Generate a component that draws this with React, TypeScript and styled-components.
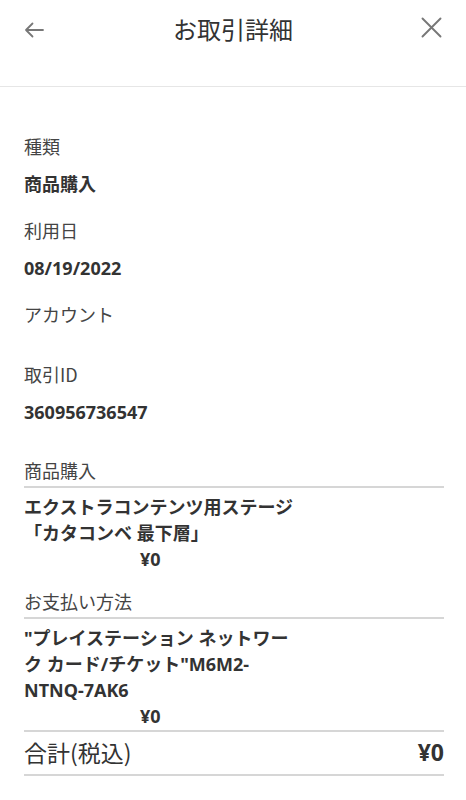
import React from "react";
import styled, { createGlobalStyle } from "styled-components";

const Global = createGlobalStyle`
  html, body { margin: 0; padding: 0; background: #fff; }
  body { font-family: "Noto Sans", "Noto Sans CJK JP", sans-serif; color: #333; }
`;

const Page = styled.div`
  width: 466px;
  min-height: 800px;
  background: #fff;
`;

const Header = styled.header`
  display: grid;
  grid-template-columns: 1fr auto 1fr;
  align-items: center;
  height: 58px;
  padding: 0 24px 28px 24px;
  border-bottom: 1px solid #e6e6e6;
`;

const Title = styled.h1`
  margin: 0;
  font-size: 24px;
  font-weight: 400;
  color: #333;
  line-height: 30px;
  font-family: "Noto Sans CJK JP", sans-serif;
`;

const IconBtn = styled.button<{ $right?: boolean }>`
  border: 0;
  background: none;
  padding: 0;
  display: flex;
  justify-content: ${(p) => (p.$right ? "flex-end" : "flex-start")};
  align-items: center;
  margin-top: ${(p) => (p.$right ? "-4px" : "2px")};
  cursor: pointer;
`;

const Body = styled.main`
  padding: 49px 22px 0 24px;
`;

const Field = styled.div`
  padding-bottom: 24px;
`;

const Label = styled.div`
  font-size: 18px;
  line-height: 20px;
  color: #444;
  padding-bottom: 16px;
  font-family: "Noto Sans CJK JP", sans-serif;
`;

const Value = styled.div`
  font-size: 18px;
  line-height: 24px;
  font-weight: 700;
  color: #333;
`;

const SectionLabel = styled.div<{ $top: number }>`
  margin-top: ${(p) => p.$top}px;
  font-size: 18px;
  line-height: 24px;
  color: #444;
  padding-bottom: 4px;
  font-family: "Noto Sans CJK JP", sans-serif;
`;

const Block = styled.div<{ $bottom: number }>`
  border-top: 2px solid #d6d6d6;
  padding: 6px 0 ${(p) => p.$bottom}px 0;
`;

const BlockText = styled.div`
  max-width: 276px;
  font-size: 18px;
  line-height: 26px;
  font-weight: 700;
  color: #333;
  line-break: strict;
`;

const Price = styled.div`
  padding-left: 116px;
  font-size: 18px;
  line-height: 26px;
  font-weight: 700;
  color: #333;
`;

const TotalRow = styled.div`
  display: flex;
  justify-content: space-between;
  align-items: center;
  border-top: 2px solid #d6d6d6;
  border-bottom: 2px solid #d6d6d6;
  padding: 5px 0 7px 0;
  line-height: 30px;
`;

const TotalLabel = styled.span`
  font-size: 23px;
  color: #333;
  font-family: "Noto Sans CJK JP", sans-serif;
`;

const TotalValue = styled.span`
  font-size: 23px;
  font-weight: 700;
  color: #333;
`;

const BackIcon = () => (
  <svg width="20" height="16" viewBox="0 0 20 16" fill="none">
    <path d="M19 8H2M8.5 1.5L2 8l6.5 6.5" stroke="#777" strokeWidth="1.8" strokeLinecap="round" strokeLinejoin="round" />
  </svg>
);

const CloseIcon = () => (
  <svg width="21" height="21" viewBox="0 0 21 21" fill="none">
    <path d="M1.5 1.5L19.5 19.5M19.5 1.5L1.5 19.5" stroke="#777" strokeWidth="1.9" strokeLinecap="round" />
  </svg>
);

const fields = [
  { label: "種類", value: "商品購入" },
  { label: "利用日", value: "08/19/2022" },
  { label: "アカウント", value: "" },
  { label: "取引ID", value: "360956736547" },
];

export default function App() {
  return (
    <Page>
      <Global />
      <Header>
        <IconBtn aria-label="戻る">
          <BackIcon />
        </IconBtn>
        <Title>お取引詳細</Title>
        <IconBtn $right aria-label="閉じる">
          <CloseIcon />
        </IconBtn>
      </Header>
      <Body>
        {fields.map((f) => (
          <Field key={f.label}>
            <Label>{f.label}</Label>
            {f.value && <Value>{f.value}</Value>}
          </Field>
        ))}
        <SectionLabel $top={10}>商品購入</SectionLabel>
        <Block $bottom={3}>
          <BlockText>
            エクストラコンテンツ用ステージ
            <br />
            「カタコンベ 最下層」
          </BlockText>
          <Price>¥0</Price>
        </Block>
        <SectionLabel $top={14}>お支払い方法</SectionLabel>
        <Block $bottom={1}>
          <BlockText>"プレイステーション ネットワーク カード/チケット"M6M2-NTNQ-7AK6</BlockText>
          <Price>¥0</Price>
        </Block>
        <TotalRow>
          <TotalLabel>合計(税込)</TotalLabel>
          <TotalValue>¥0</TotalValue>
        </TotalRow>
      </Body>
    </Page>
  );
}
